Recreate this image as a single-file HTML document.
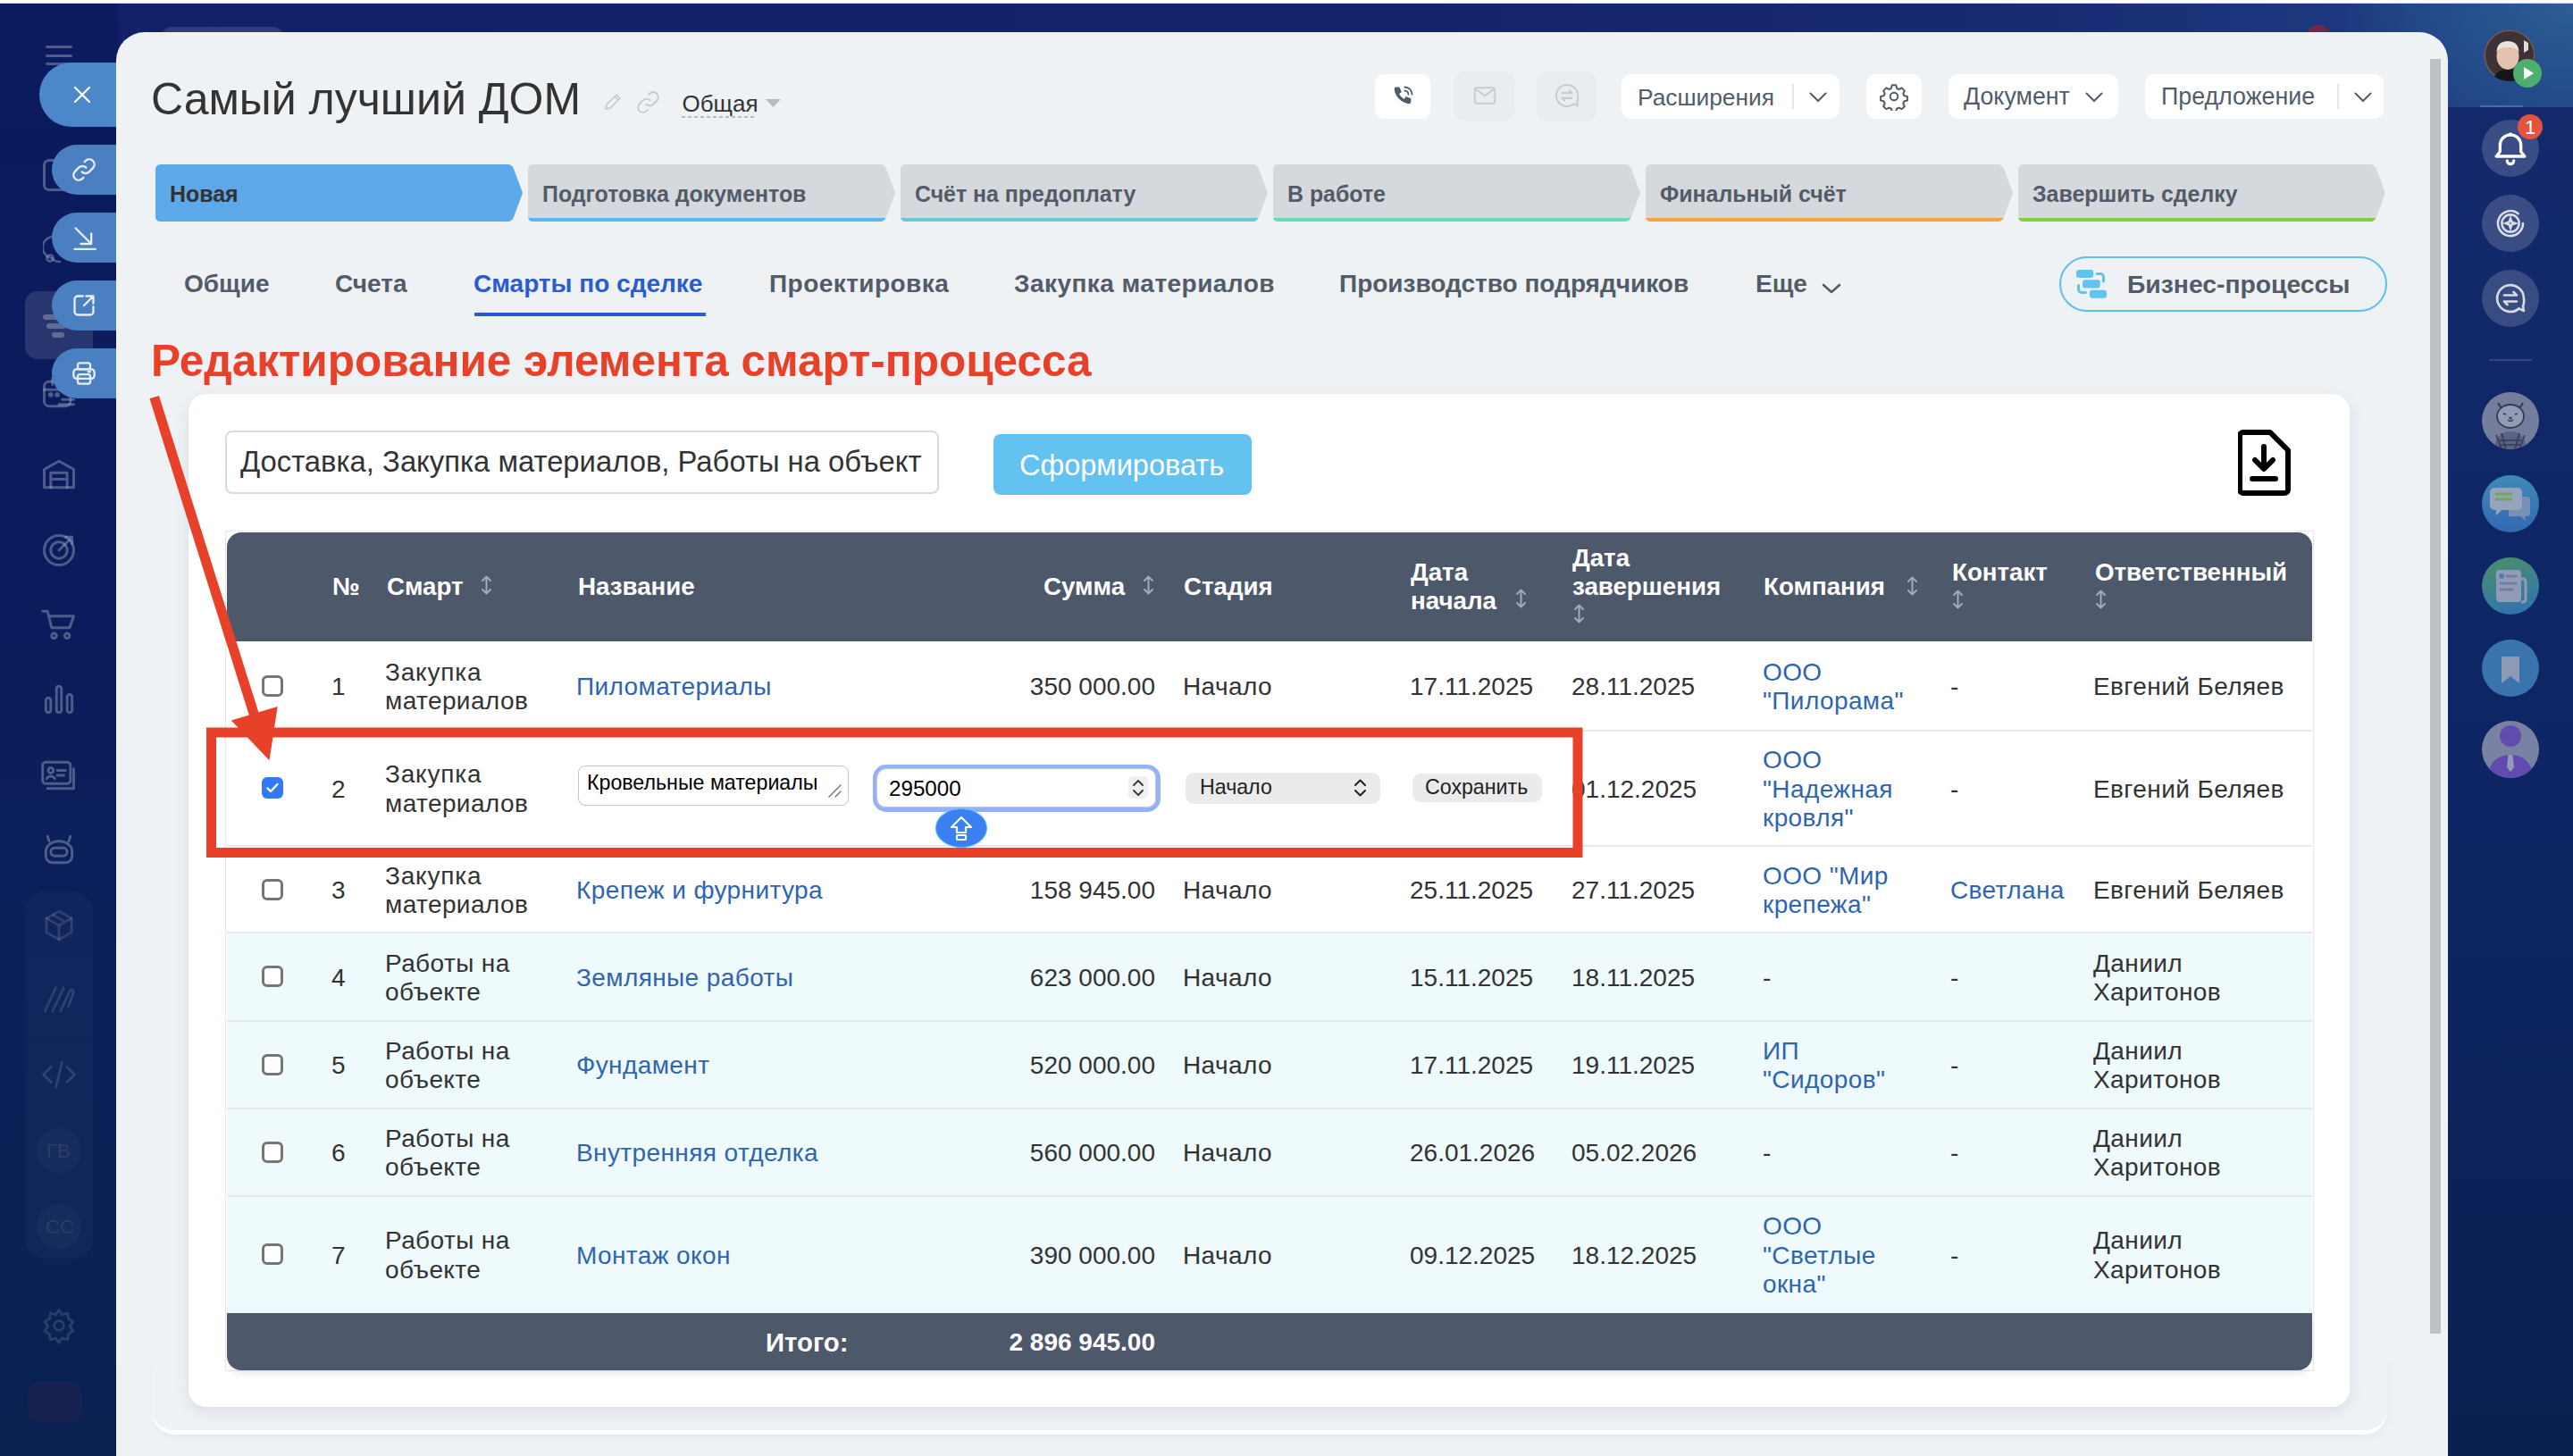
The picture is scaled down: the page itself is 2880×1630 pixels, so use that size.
<!DOCTYPE html><html><head><meta charset="utf-8"><style>
*{box-sizing:border-box}
html,body{margin:0;padding:0}
body{width:2880px;height:1630px;overflow:hidden;position:relative;background:#12206a;font-family:"Liberation Sans",sans-serif}
.t{position:absolute;white-space:nowrap;line-height:1}
</style></head><body><div style="position:absolute;left:0px;top:0px;width:2880px;height:1630px;background:#12206a"></div><div style="position:absolute;left:0px;top:0px;width:2880px;height:120px;background:radial-gradient(ellipse 260px 190px at 2880px 0px,#2d5f95 0%,#244c8b 55%,rgba(32,62,130,0) 100%),linear-gradient(90deg,#12206a 0%,#14226b 55%,#172a72 78%,#1e3a80 93%,#21428a 100%)"></div><div style="position:absolute;left:0px;top:0px;width:132px;height:1630px;background:linear-gradient(180deg,#0c1a5e 0%,#0b1c5c 40%,#0b2258 75%,#0a2152 100%)"></div><div style="position:absolute;left:2740px;top:120px;width:140px;height:1510px;background:linear-gradient(180deg,#13296c 0%,#0f2766 30%,#0c2460 60%,#0a2050 100%)"></div><div style="position:absolute;left:0px;top:0px;width:2880px;height:3px;background:#fcfcfc"></div><div style="position:absolute;left:0px;top:3px;width:2880px;height:1px;background:#d9d9d9"></div><div style="position:absolute;left:178px;top:30px;width:142px;height:20px;background:rgba(255,255,255,0.12);border-radius:16px 16px 0 0"></div><div style="position:absolute;left:2581px;top:28px;width:28px;height:28px;background:#6e2848;border-radius:50%"></div><div style="position:absolute;left:51px;top:50.5px;width:30px;height:3.0px;background:rgba(170,180,205,0.42);border-radius:2px"></div><div style="position:absolute;left:51px;top:60.5px;width:30px;height:3.0px;background:rgba(170,180,205,0.42);border-radius:2px"></div><div style="position:absolute;left:51px;top:70.0px;width:30px;height:3.0px;background:rgba(170,180,205,0.42);border-radius:2px"></div><div style="position:absolute;left:28px;top:326px;width:76px;height:76px;background:rgba(255,255,255,0.12);border-radius:14px"></div><svg style="position:absolute;left:44px;top:174px;fill:none;stroke:rgba(170,180,205,0.42);stroke-width:1.6;stroke-linecap:round;stroke-linejoin:round" width="44" height="44" viewBox="0 0 24 24"><rect x="3" y="3" width="15" height="18" rx="3"/></svg><svg style="position:absolute;left:48px;top:262px;fill:none;stroke:rgba(170,180,205,0.42);stroke-width:2.6;stroke-linecap:round" width="34" height="36" viewBox="0 0 34 36"><path d="M14 3a11 11 0 0 0-4 24M10 27a11 11 0 0 0 9 4"/><circle cx="8" cy="27" r="3.5"/></svg><svg style="position:absolute;left:48px;top:350px;fill:rgba(170,180,205,0.42);stroke:none" width="40" height="30" viewBox="0 0 40 30"><rect x="0" y="2" width="22" height="6" rx="3"/><rect x="4" y="12" width="22" height="6" rx="3"/><rect x="10" y="22" width="14" height="6" rx="3"/></svg><svg style="position:absolute;left:44px;top:418px;fill:none;stroke:rgba(170,180,205,0.42);stroke-width:1.6;stroke-linecap:round;stroke-linejoin:round" width="44" height="44" viewBox="0 0 24 24"><rect x="3" y="5" width="16" height="15" rx="3"/><path d="M8 3v4M3 10h16"/><circle cx="7" cy="13" r=".8"/><circle cx="11" cy="13" r=".8"/><path d="M12 19h9M14 16h7"/></svg><svg style="position:absolute;left:44px;top:509px;fill:none;stroke:rgba(170,180,205,0.42);stroke-width:1.6;stroke-linecap:round;stroke-linejoin:round" width="44" height="44" viewBox="0 0 24 24"><path d="M3 20V9l9-5 9 5v11z"/><path d="M7 20v-9h10v9M7 15h10"/></svg><svg style="position:absolute;left:44px;top:594px;fill:none;stroke:rgba(170,180,205,0.42);stroke-width:1.6;stroke-linecap:round;stroke-linejoin:round" width="44" height="44" viewBox="0 0 24 24"><circle cx="12" cy="12" r="9"/><circle cx="12" cy="12" r="5"/><path d="M12 12l7-7M16 4h4v4"/></svg><svg style="position:absolute;left:44px;top:677px;fill:none;stroke:rgba(170,180,205,0.42);stroke-width:1.6;stroke-linecap:round;stroke-linejoin:round" width="44" height="44" viewBox="0 0 24 24"><path d="M2 4h3l2.5 10h11L21 7H6"/><circle cx="9" cy="19" r="1.5"/><circle cx="17" cy="19" r="1.5"/></svg><svg style="position:absolute;left:44px;top:761px;fill:none;stroke:rgba(170,180,205,0.42);stroke-width:1.6;stroke-linecap:round;stroke-linejoin:round" width="44" height="44" viewBox="0 0 24 24"><rect x="4" y="11" width="3" height="9" rx="1.5"/><rect x="10.5" y="4" width="3" height="16" rx="1.5"/><rect x="17" y="9" width="3" height="11" rx="1.5"/></svg><svg style="position:absolute;left:44px;top:846px;fill:none;stroke:rgba(170,180,205,0.42);stroke-width:1.6;stroke-linecap:round;stroke-linejoin:round" width="44" height="44" viewBox="0 0 24 24"><rect x="2" y="4" width="17" height="13" rx="2"/><path d="M5 20h16V8"/><circle cx="7" cy="9" r="1.6"/><path d="M4.5 14c1-2 4-2 5 0M11 9h5M11 12h4"/></svg><svg style="position:absolute;left:44px;top:929px;fill:none;stroke:rgba(170,180,205,0.42);stroke-width:1.6;stroke-linecap:round;stroke-linejoin:round" width="44" height="44" viewBox="0 0 24 24"><path d="M4 13a8 6 0 0 1 16 0v3a4 4 0 0 1-4 4H8a4 4 0 0 1-4-4z"/><path d="M6 7L5 4M18 7l1-3"/><rect x="7" y="11" width="10" height="5" rx="2.5"/></svg><div style="position:absolute;left:28px;top:998px;width:76px;height:411px;background:rgba(255,255,255,0.025);border-radius:22px"></div><svg style="position:absolute;left:45px;top:1015px;fill:none;stroke:rgba(170,180,205,0.2);stroke-width:1.6;stroke-linecap:round;stroke-linejoin:round" width="42" height="42" viewBox="0 0 24 24"><path d="M12 3l8 4.5v9L12 21l-8-4.5v-9z"/><path d="M4 7.5l8 4.5 8-4.5M12 12v9M8 5.3l8 4.5"/></svg><svg style="position:absolute;left:45px;top:1097px;fill:none;stroke:rgba(170,180,205,0.2);stroke-width:1.6;stroke-linecap:round;stroke-linejoin:round" width="42" height="42" viewBox="0 0 24 24"><path d="M3 20L10 5M8 20l7-15M13 20l6-13c1-2 3 0 2 2l-3 8"/></svg><svg style="position:absolute;left:45px;top:1182px;fill:none;stroke:rgba(170,180,205,0.2);stroke-width:1.6;stroke-linecap:round;stroke-linejoin:round" width="42" height="42" viewBox="0 0 24 24"><path d="M7 7l-5 5 5 5M17 7l5 5-5 5M14 4l-4 16"/></svg><div style="position:absolute;left:41px;top:1263px;width:50px;height:50px;background:rgba(255,255,255,0.03);border-radius:50%"></div><div class="t" style="left:52.0px;top:1278.4px;font-size:22px;font-weight:400;color:rgba(170,180,205,0.14);">ГВ</div><div style="position:absolute;left:41px;top:1348px;width:50px;height:50px;background:rgba(255,255,255,0.03);border-radius:50%"></div><div class="t" style="left:51.0px;top:1363.4px;font-size:22px;font-weight:400;color:rgba(170,180,205,0.14);">СС</div><svg style="position:absolute;left:45px;top:1463px;fill:none;stroke:rgba(170,180,205,0.2);stroke-width:1.6;stroke-linecap:round;stroke-linejoin:round" width="42" height="42" viewBox="0 0 24 24"><circle cx="12" cy="12" r="3"/><path d="M12 2l2 3 3.5-1 .5 3.5 3 2-2 3 2 3-3 2-.5 3.5-3.5-1-2 3-2-3-3.5 1-.5-3.5-3-2 2-3-2-3 3-2 .5-3.5 3.5 1z"/></svg><div style="position:absolute;left:31px;top:1547px;width:61px;height:45px;background:rgba(150,40,60,0.10);border-radius:14px"></div><svg style="position:absolute;left:2780px;top:33px;" width="58" height="58" viewBox="0 0 58 58"><defs><clipPath id="av"><circle cx="29" cy="29" r="29"/></clipPath></defs><g clip-path="url(#av)"><rect width="58" height="58" fill="#3e3236"/><circle cx="29" cy="29" r="28" fill="none" stroke="#6a5a60" stroke-width="2"/><path d="M10 58c2-10 10-14 19-14s17 4 19 14z" fill="#15161c"/><ellipse cx="27" cy="30" rx="12.5" ry="15" fill="#e4c2ae"/><path d="M14.5 26c0-10 6-13 12.5-13s12.5 3 12.5 13c-2-5-6-6-12.5-6s-10.5 1-12.5 6z" fill="#e9e5da"/><path d="M45 12l5 3v8l-5 3z" fill="#ddd"/><circle cx="46" cy="44" r="2.5" fill="#e0a030"/></g></svg><div style="position:absolute;left:2813px;top:66px;width:32px;height:32px;background:#4caf6e;border-radius:50%"></div><svg style="position:absolute;left:2823px;top:73px;" width="14" height="18" viewBox="0 0 14 18"><path d="M2 2L13 9L2 16z" fill="#fff"/></svg><div style="position:absolute;left:2776px;top:118px;width:48px;height:2px;background:rgba(255,255,255,0.2)"></div><div style="position:absolute;left:2778px;top:134px;width:64px;height:64px;background:rgba(255,255,255,0.17);border-radius:50%"></div><div style="position:absolute;left:2778px;top:218px;width:64px;height:64px;background:rgba(255,255,255,0.17);border-radius:50%"></div><div style="position:absolute;left:2778px;top:302px;width:64px;height:64px;background:rgba(255,255,255,0.17);border-radius:50%"></div><svg style="position:absolute;left:2790px;top:144px;fill:none;stroke:#fff;stroke-width:2;stroke-linecap:round;stroke-linejoin:round" width="40" height="42" viewBox="0 0 24 24"><path d="M2.5 18h19l-2.5-3.2V10.5a7 7 0 0 0-14 0v4.3z"/><path d="M9.8 21a2.2 2.2 0 0 0 4.4 0M12 3v.6"/></svg><div style="position:absolute;left:2818px;top:128px;width:28px;height:28px;background:#e3533f;border-radius:50%"></div><div class="t" style="left:2826.0px;top:132.4px;font-size:22px;font-weight:400;color:#fff;">1</div><svg style="position:absolute;left:2789px;top:229px;fill:none;stroke:rgba(255,255,255,0.8);stroke-width:1.5;stroke-linecap:round" width="42" height="42" viewBox="0 0 24 24"><path d="M20 12a8 8 0 1 1-3-6.2"/><circle cx="12" cy="12" r="5.5"/><path d="M12 9l.8 2.2L15 12l-2.2.8L12 15l-.8-2.2L9 12l2.2-.8z"/></svg><svg style="position:absolute;left:2789px;top:313px;fill:none;stroke:rgba(255,255,255,0.8);stroke-width:1.5;stroke-linecap:round;stroke-linejoin:round" width="42" height="42" viewBox="0 0 24 24"><path d="M20.5 12a8.5 8.5 0 1 0-3 6.5l3 1.5-.5-3a8.5 8.5 0 0 0 .5-5z"/><path d="M8 10h8l-2-2M16 14H8l2 2"/></svg><div style="position:absolute;left:2786px;top:402px;width:48px;height:2px;background:rgba(255,255,255,0.15)"></div><svg style="position:absolute;left:2778px;top:439px;opacity:.82" width="64" height="64" viewBox="0 0 64 64"><defs><clipPath id="ac471"><circle cx="32" cy="32" r="32"/></clipPath></defs><g clip-path="url(#ac471)"><rect width="64" height="64" fill="#8c91a8"/><path d="M14 64c1-14 8-20 18-20s17 6 18 20z" fill="#6a6f86"/><path d="M16 48l6 16M22 46l5 18M42 46l-5 18M48 48l-6 16M20 54h24M20 59h24" stroke="#3c4058" stroke-width="1.6"/><path d="M18 12l5 8M46 12l-5 8" stroke="#3c4058" stroke-width="2"/><ellipse cx="32" cy="27" rx="15" ry="13" fill="#b2b6c6" stroke="#3c4058" stroke-width="1.8"/><path d="M27 25l-3-1M37 25l3-1M29 31q3 3 6 0" stroke="#3c4058" stroke-width="1.6" fill="none"/><circle cx="32" cy="29" r="1.6" fill="#3c4058"/></g></svg><svg style="position:absolute;left:2778px;top:532px;opacity:.82" width="64" height="64" viewBox="0 0 64 64"><defs><clipPath id="ac564"><circle cx="32" cy="32" r="32"/></clipPath></defs><g clip-path="url(#ac564)"><defs><linearGradient id="g1" x1="0" y1="0" x2="0" y2="1"><stop offset="0" stop-color="#4aa0c8"/><stop offset="1" stop-color="#3a78c4"/></linearGradient></defs><rect width="64" height="64" fill="url(#g1)"/><path d="M30 24h20a4 4 0 0 1 4 4v14a4 4 0 0 1-4 4h-2l1 5-6-5H30z" fill="#8fa8c8"/><path d="M14 14h26a5 5 0 0 1 5 5v15a5 5 0 0 1-5 5H22l-6 6v-6h-2a5 5 0 0 1-5-5V19a5 5 0 0 1 5-5z" fill="#b4bfd2"/><path d="M16 21h17M16 27h17" stroke="#8cc34a" stroke-width="3" stroke-linecap="round"/></g></svg><svg style="position:absolute;left:2778px;top:624px;opacity:.82" width="64" height="64" viewBox="0 0 64 64"><defs><clipPath id="ac656"><circle cx="32" cy="32" r="32"/></clipPath></defs><g clip-path="url(#ac656)"><defs><linearGradient id="g2" x1="0" y1="0" x2="0.3" y2="1"><stop offset="0" stop-color="#5aa868"/><stop offset="1" stop-color="#3a88b8"/></linearGradient></defs><rect width="64" height="64" fill="url(#g2)"/><rect x="16" y="14" width="28" height="36" rx="4" fill="#aeb5c8"/><path d="M44 24h2a3 3 0 0 1 3 3v20a3 3 0 0 1-3 3h-2" fill="none" stroke="#aeb5c8" stroke-width="3"/><circle cx="22" cy="21" r="3" fill="#4a98c8"/><path d="M28 21h10M21 29h17M21 36h13" stroke="#8a93ac" stroke-width="3" stroke-linecap="round"/></g></svg><svg style="position:absolute;left:2778px;top:716px;opacity:.82" width="64" height="64" viewBox="0 0 64 64"><defs><clipPath id="ac748"><circle cx="32" cy="32" r="32"/></clipPath></defs><g clip-path="url(#ac748)"><rect width="64" height="64" fill="#4486c0"/><path d="M22 19h20v30l-10-8-10 8z" fill="#aab4c8"/></g></svg><svg style="position:absolute;left:2778px;top:807px;opacity:.82" width="64" height="64" viewBox="0 0 64 64"><defs><clipPath id="ac839"><circle cx="32" cy="32" r="32"/></clipPath></defs><g clip-path="url(#ac839)"><rect width="64" height="64" fill="#9297b2"/><circle cx="32" cy="17" r="12" fill="#7454c0"/><path d="M6 64c2-18 12-26 26-26s24 8 26 26z" fill="#7454c0"/><path d="M29.5 38h5l1.5 14-4 5-4-5z" fill="#b0b4cc"/></g></svg><div style="position:absolute;left:44px;top:70px;width:96px;height:72px;background:#4a88c9;border-radius:36px 0 0 36px"></div><svg style="position:absolute;left:82px;top:96px;" width="20" height="20" viewBox="0 0 20 20"><path d="M2 2L18 18M18 2L2 18" stroke="#fff" stroke-width="2.2" stroke-linecap="round"/></svg><div style="position:absolute;left:58px;top:162px;width:82px;height:56px;background:#4a80c2;border-radius:28px 0 0 28px"></div><div style="position:absolute;left:58px;top:238px;width:82px;height:56px;background:#4a80c2;border-radius:28px 0 0 28px"></div><div style="position:absolute;left:58px;top:314px;width:82px;height:56px;background:#4a80c2;border-radius:28px 0 0 28px"></div><div style="position:absolute;left:58px;top:390px;width:82px;height:56px;background:#4a80c2;border-radius:28px 0 0 28px"></div><svg style="position:absolute;left:80px;top:176px;fill:none;stroke:#e8edf5;stroke-width:2;stroke-linecap:round;stroke-linejoin:round" width="28" height="28" viewBox="0 0 24 24"><path d="M10 14a5 5 0 0 0 7 0l4-4a5 5 0 0 0-7-7l-1.5 1.5"/><path d="M14 10a5 5 0 0 0-7 0l-4 4a5 5 0 0 0 7 7l1.5-1.5"/></svg><svg style="position:absolute;left:80px;top:252px;fill:none;stroke:#e8edf5;stroke-width:2;stroke-linecap:round;stroke-linejoin:round" width="28" height="28" viewBox="0 0 24 24"><path d="M4 3l15 15M19 8v10H9M3 23h20"/></svg><svg style="position:absolute;left:80px;top:328px;fill:none;stroke:#e8edf5;stroke-width:2;stroke-linecap:round;stroke-linejoin:round" width="28" height="28" viewBox="0 0 24 24"><path d="M11 3H6a3 3 0 0 0-3 3v12a3 3 0 0 0 3 3h12a3 3 0 0 0 3-3v-5M14 3h7v7M21 3l-9 9"/></svg><svg style="position:absolute;left:80px;top:404px;fill:none;stroke:#e8edf5;stroke-width:2;stroke-linecap:round;stroke-linejoin:round" width="28" height="28" viewBox="0 0 24 24"><rect x="6" y="2" width="12" height="6" rx="2"/><rect x="2" y="8" width="20" height="9" rx="3"/><rect x="6" y="13" width="12" height="9" rx="2"/><path d="M16 10.5h2"/></svg><div style="position:absolute;left:130px;top:36px;width:2610px;height:1644px;background:#eef2f5;border-radius:32px 32px 0 0"></div><div style="position:absolute;left:2720px;top:66px;width:12px;height:1427px;background:#bdc1c3"></div><div class="t" style="left:169.0px;top:86.1px;font-size:50px;font-weight:400;color:#333;">Самый лучший ДОМ</div><svg style="position:absolute;left:674px;top:102px;fill:none;stroke:#c5c9ce;stroke-width:1.6;stroke-linecap:round;stroke-linejoin:round" width="24" height="24" viewBox="0 0 24 24"><path d="M4 20l1-5L16 4l4 4L9 19z M14 6l4 4"/></svg><svg style="position:absolute;left:712px;top:101px;fill:none;stroke:#c5c9ce;stroke-width:1.6;stroke-linecap:round;stroke-linejoin:round" width="27" height="27" viewBox="0 0 24 24"><path d="M10 14a5 5 0 0 0 7 0l4-4a5 5 0 0 0-7-7l-1.5 1.5"/><path d="M14 10a5 5 0 0 0-7 0l-4 4a5 5 0 0 0 7 7l1.5-1.5"/></svg><div class="t" style="left:763.5px;top:102.6px;font-size:26px;font-weight:400;color:#333;">Общая</div><div style="position:absolute;left:763px;top:130px;width:84px;height:2px;background:repeating-linear-gradient(90deg,#b9bdc3 0 4px,transparent 4px 7px)"></div><svg style="position:absolute;left:857px;top:111px;" width="17" height="9" viewBox="0 0 17 9"><path d="M0 0h17L8.5 9z" fill="#b5bac1"/></svg><div style="position:absolute;left:1539px;top:83px;width:62px;height:50px;background:#fff;border-radius:11px"></div><svg style="position:absolute;left:1556px;top:94px;" width="28" height="28" viewBox="0 0 24 24"><path d="M6 3h3l2 5-2.5 1.5a11 11 0 0 0 5 5L15 12l5 2v3a2 2 0 0 1-2 2A16 16 0 0 1 4 5a2 2 0 0 1 2-2z" fill="#525c69"/><path d="M14 3a7 7 0 0 1 7 7M14 6.5a3.5 3.5 0 0 1 3.5 3.5" stroke="#525c69" stroke-width="1.6" fill="none" stroke-linecap="round"/></svg><div style="position:absolute;left:1628px;top:81px;width:67px;height:54px;background:rgba(0,0,0,0.018);box-shadow:inset 0 0 0 1px rgba(0,0,0,0.02);border-radius:11px"></div><svg style="position:absolute;left:1645px;top:92px;fill:none;stroke:#c8ccd1;stroke-width:1.5" width="34" height="30" viewBox="0 0 24 24"><rect x="3" y="5" width="18" height="14" rx="2"/><path d="M3.5 6l8.5 6 8.5-6"/></svg><div style="position:absolute;left:1720px;top:81px;width:67px;height:54px;background:rgba(0,0,0,0.018);box-shadow:inset 0 0 0 1px rgba(0,0,0,0.02);border-radius:11px"></div><svg style="position:absolute;left:1737px;top:90px;fill:none;stroke:#c8ccd1;stroke-width:1.5;stroke-linecap:round;stroke-linejoin:round" width="34" height="34" viewBox="0 0 24 24"><path d="M20.5 12a8.5 8.5 0 1 0-3 6.5l3 1.5-.5-3a8.5 8.5 0 0 0 .5-5z"/><path d="M8 10h8l-2-2M16 14H8l2 2"/></svg><div style="position:absolute;left:1815px;top:83px;width:244px;height:50px;background:#fff;border-radius:11px"></div><div class="t" style="left:1833.0px;top:95.7px;font-size:26.3px;font-weight:400;color:#525c69;">Расширения</div><div style="position:absolute;left:2006px;top:94px;width:2px;height:28px;background:#e3e5e8"></div><svg style="position:absolute;left:2025px;top:103px;" width="20" height="12" viewBox="0 0 20 12"><path d="M1.5 1.5L10 10l8.5-8.5" fill="none" stroke="#525c69" stroke-width="2" stroke-linecap="round"/></svg><div style="position:absolute;left:2089px;top:83px;width:62px;height:50px;background:#fff;border-radius:11px"></div><svg style="position:absolute;left:2104px;top:92px;fill:none;stroke:#525c69;stroke-width:1.5;stroke-linejoin:round" width="32" height="32" viewBox="0 0 24 24"><circle cx="12" cy="12" r="3.2"/><path d="M10.3 2.5h3.4l.6 2.6 1.8.9 2.4-1.2 2.4 2.4-1.2 2.4.9 1.8 2.6.6v3.4l-2.6.6-.9 1.8 1.2 2.4-2.4 2.4-2.4-1.2-1.8.9-.6 2.6h-3.4l-.6-2.6-1.8-.9-2.4 1.2-2.4-2.4 1.2-2.4-.9-1.8-2.6-.6v-3.4l2.6-.6.9-1.8-1.2-2.4 2.4-2.4 2.4 1.2 1.8-.9z"/></svg><div style="position:absolute;left:2181px;top:83px;width:190px;height:50px;background:#fff;border-radius:11px"></div><div class="t" style="left:2198.0px;top:95.3px;font-size:26.8px;font-weight:400;color:#525c69;">Документ</div><svg style="position:absolute;left:2334px;top:103px;" width="20" height="12" viewBox="0 0 20 12"><path d="M1.5 1.5L10 10l8.5-8.5" fill="none" stroke="#525c69" stroke-width="2" stroke-linecap="round"/></svg><div style="position:absolute;left:2401px;top:83px;width:267px;height:50px;background:#fff;border-radius:11px"></div><div class="t" style="left:2419.0px;top:95.3px;font-size:26.8px;font-weight:400;color:#525c69;">Предложение</div><div style="position:absolute;left:2616px;top:94px;width:2px;height:28px;background:#e3e5e8"></div><svg style="position:absolute;left:2635px;top:103px;" width="20" height="12" viewBox="0 0 20 12"><path d="M1.5 1.5L10 10l8.5-8.5" fill="none" stroke="#525c69" stroke-width="2" stroke-linecap="round"/></svg><svg style="position:absolute;left:174px;top:184px;" width="411" height="64" viewBox="0 0 411 64"><path d="M6 0 H394 Q399 0 401 5 L411 32 L401 59 Q399 64 394 64 H6 Q0 64 0 58 V6 Q0 0 6 0 Z" fill="#5ca8e8"/></svg><div class="t" style="left:190.0px;top:205.4px;font-size:24.9px;font-weight:700;color:#333;">Новая</div><svg style="position:absolute;left:591px;top:184px;" width="411" height="64" viewBox="0 0 411 64"><defs><clipPath id="c1"><path d="M6 0 H394 Q399 0 401 5 L411 32 L401 59 Q399 64 394 64 H6 Q0 64 0 58 V6 Q0 0 6 0 Z"/></clipPath></defs><g clip-path="url(#c1)"><rect width="411" height="64" fill="#d5d8dd"/><rect y="60" width="411" height="4" fill="#5bb8ec"/></g></svg><div class="t" style="left:607.0px;top:205.4px;font-size:24.9px;font-weight:700;color:#525c69;">Подготовка документов</div><svg style="position:absolute;left:1008px;top:184px;" width="411" height="64" viewBox="0 0 411 64"><defs><clipPath id="c2"><path d="M6 0 H394 Q399 0 401 5 L411 32 L401 59 Q399 64 394 64 H6 Q0 64 0 58 V6 Q0 0 6 0 Z"/></clipPath></defs><g clip-path="url(#c2)"><rect width="411" height="64" fill="#d5d8dd"/><rect y="60" width="411" height="4" fill="#6fc6d6"/></g></svg><div class="t" style="left:1024.0px;top:205.4px;font-size:24.9px;font-weight:700;color:#525c69;">Счёт на предоплату</div><svg style="position:absolute;left:1425px;top:184px;" width="411" height="64" viewBox="0 0 411 64"><defs><clipPath id="c3"><path d="M6 0 H394 Q399 0 401 5 L411 32 L401 59 Q399 64 394 64 H6 Q0 64 0 58 V6 Q0 0 6 0 Z"/></clipPath></defs><g clip-path="url(#c3)"><rect width="411" height="64" fill="#d5d8dd"/><rect y="60" width="411" height="4" fill="#6cdbb6"/></g></svg><div class="t" style="left:1441.0px;top:205.4px;font-size:24.9px;font-weight:700;color:#525c69;">В работе</div><svg style="position:absolute;left:1842px;top:184px;" width="411" height="64" viewBox="0 0 411 64"><defs><clipPath id="c4"><path d="M6 0 H394 Q399 0 401 5 L411 32 L401 59 Q399 64 394 64 H6 Q0 64 0 58 V6 Q0 0 6 0 Z"/></clipPath></defs><g clip-path="url(#c4)"><rect width="411" height="64" fill="#d5d8dd"/><rect y="60" width="411" height="4" fill="#f5a53f"/></g></svg><div class="t" style="left:1858.0px;top:205.4px;font-size:24.9px;font-weight:700;color:#525c69;">Финальный счёт</div><svg style="position:absolute;left:2259px;top:184px;" width="411" height="64" viewBox="0 0 411 64"><defs><clipPath id="c5"><path d="M6 0 H394 Q399 0 401 5 L411 32 L401 59 Q399 64 394 64 H6 Q0 64 0 58 V6 Q0 0 6 0 Z"/></clipPath></defs><g clip-path="url(#c5)"><rect width="411" height="64" fill="#d5d8dd"/><rect y="60" width="411" height="4" fill="#7fd03c"/></g></svg><div class="t" style="left:2275.0px;top:205.4px;font-size:24.9px;font-weight:700;color:#525c69;">Завершить сделку</div><div class="t" style="left:206.0px;top:304.3px;font-size:28px;font-weight:700;color:#525c69;">Общие</div><div class="t" style="left:375.0px;top:304.3px;font-size:28px;font-weight:700;color:#525c69;">Счета</div><div class="t" style="left:530.0px;top:304.3px;font-size:28px;font-weight:700;color:#2a5bd0;">Смарты по сделке</div><div class="t" style="left:861.0px;top:304.3px;font-size:28px;font-weight:700;color:#525c69;letter-spacing:0.45px">Проектировка</div><div class="t" style="left:1135.0px;top:304.3px;font-size:28px;font-weight:700;color:#525c69;letter-spacing:0.45px">Закупка материалов</div><div class="t" style="left:1499.0px;top:304.3px;font-size:28px;font-weight:700;color:#525c69;">Производство подрядчиков</div><div class="t" style="left:1965.0px;top:304.3px;font-size:28px;font-weight:700;color:#525c69;">Еще</div><div style="position:absolute;left:531px;top:350px;width:259px;height:4px;background:#2a5bd0;border-radius:1px"></div><svg style="position:absolute;left:2038px;top:316px;" width="24" height="14" viewBox="0 0 24 14"><path d="M3 3l9 8 9-8" fill="none" stroke="#525c69" stroke-width="2.6" stroke-linecap="round" stroke-linejoin="round"/></svg><div style="position:absolute;left:2305px;top:287px;width:367px;height:62px;border:2px solid #5ec0ee;border-radius:31px"></div><svg style="position:absolute;left:2320px;top:298px;" width="42" height="40" viewBox="0 0 42 40"><rect x="4" y="4" width="19.2" height="9" rx="3" fill="#62c2f0"/><rect x="11" y="15.2" width="19.8" height="9.4" rx="3" fill="#62c2f0"/><rect x="19" y="26.8" width="19" height="9" rx="3" fill="#62c2f0"/><path d="M27 8.5H31a3.5 3.5 0 0 1 3.5 3.5V17M6.5 21.5V26a3.5 3.5 0 0 0 3.5 3.5H14.5" fill="none" stroke="#62c2f0" stroke-width="3" stroke-linecap="round"/></svg><div class="t" style="left:2381.0px;top:304.0px;font-size:28.3px;font-weight:700;color:#525c69;">Бизнес-процессы</div><div class="t" style="left:169.0px;top:379.1px;font-size:49.5px;font-weight:700;color:#e8412a;">Редактирование элемента смарт-процесса</div><div style="position:absolute;left:170px;top:1520px;width:2502px;height:86px;border-bottom:5px solid #fff;border-radius:0 0 26px 26px;box-shadow:2px 5px 10px -2px rgba(40,50,70,0.05)"></div><div style="position:absolute;left:211px;top:441px;width:2419px;height:1134px;background:#fff;border-radius:20px;box-shadow:0 5px 16px rgba(50,60,80,0.10)"></div><div style="position:absolute;left:252px;top:482px;width:799px;height:71px;border:2px solid #d8dadd;border-radius:8px;background:#fff"></div><div class="t" style="left:269.0px;top:500.7px;font-size:32.8px;font-weight:400;color:#333;">Доставка, Закупка материалов, Работы на объект</div><div style="position:absolute;left:1112px;top:486px;width:289px;height:68px;background:#63c2f0;border-radius:8px"></div><div class="t" style="left:1141.0px;top:505.1px;font-size:32.5px;font-weight:400;color:#fff;">Сформировать</div><svg style="position:absolute;left:2505px;top:480px;" width="62" height="76" viewBox="0 0 62 76"><path d="M6 4h30l20 20v44a4 4 0 0 1-4 4H6a4 4 0 0 1-4-4V8a4 4 0 0 1 4-4z" fill="none" stroke="#000" stroke-width="6" stroke-linejoin="round"/><path d="M29 20v24M19 35l10 10 10-10" fill="none" stroke="#000" stroke-width="6" stroke-linecap="round" stroke-linejoin="round"/><path d="M16 56h26" stroke="#000" stroke-width="6" stroke-linecap="round"/></svg><div style="position:absolute;left:252px;top:594px;width:2338px;height:941px;border:1px solid #e4e6ea"></div><div style="position:absolute;left:254px;top:596px;width:2334px;height:122px;background:#4e586b;border-radius:16px 16px 0 0"></div><div style="position:absolute;left:254px;top:718px;width:2334px;height:99.5px;background:#fff"></div><div style="position:absolute;left:254px;top:817.5px;width:2334px;height:129.5px;background:#fff"></div><div style="position:absolute;left:254px;top:816.5px;width:2334px;height:2.0px;background:#e6e8eb"></div><div style="position:absolute;left:254px;top:947px;width:2334px;height:97px;background:#fff"></div><div style="position:absolute;left:254px;top:946px;width:2334px;height:2px;background:#e6e8eb"></div><div style="position:absolute;left:254px;top:1044px;width:2334px;height:98.59999999999991px;background:#eefafc"></div><div style="position:absolute;left:254px;top:1043px;width:2334px;height:2px;background:#e6e8eb"></div><div style="position:absolute;left:254px;top:1142.6px;width:2334px;height:98.0px;background:#eefafc"></div><div style="position:absolute;left:254px;top:1141.6px;width:2334px;height:2.0px;background:#e6e8eb"></div><div style="position:absolute;left:254px;top:1240.6px;width:2334px;height:97.90000000000009px;background:#eefafc"></div><div style="position:absolute;left:254px;top:1239.6px;width:2334px;height:2.0px;background:#e6e8eb"></div><div style="position:absolute;left:254px;top:1338.5px;width:2334px;height:131.5px;background:#eefafc"></div><div style="position:absolute;left:254px;top:1337.5px;width:2334px;height:2.0px;background:#e6e8eb"></div><div style="position:absolute;left:254px;top:1470px;width:2334px;height:64px;background:#4e586b;border-radius:0 0 16px 16px;box-shadow:0 7px 9px -4px rgba(30,40,60,0.12)"></div><div class="t" style="left:372.0px;top:643.1px;font-size:27.7px;font-weight:700;color:#fff;">№</div><div class="t" style="left:433.0px;top:643.1px;font-size:27.7px;font-weight:700;color:#fff;">Смарт</div><svg style="position:absolute;left:538px;top:644px;" width="13" height="22" viewBox="0 0 13 22"><path d="M6.5 2v18M2 6l4.5-4.5L11 6M2 16l4.5 4.5L11 16" fill="none" stroke="#a3aab5" stroke-width="2" stroke-linecap="round" stroke-linejoin="round"/></svg><div class="t" style="left:647.0px;top:643.1px;font-size:27.7px;font-weight:700;color:#fff;">Название</div><div class="t" style="left:1168.0px;top:643.1px;font-size:27.7px;font-weight:700;color:#fff;">Сумма</div><svg style="position:absolute;left:1279px;top:644px;" width="13" height="22" viewBox="0 0 13 22"><path d="M6.5 2v18M2 6l4.5-4.5L11 6M2 16l4.5 4.5L11 16" fill="none" stroke="#a3aab5" stroke-width="2" stroke-linecap="round" stroke-linejoin="round"/></svg><div class="t" style="left:1325.0px;top:643.1px;font-size:27.7px;font-weight:700;color:#fff;">Стадия</div><div class="t" style="left:1579.0px;top:627.1px;font-size:27.7px;font-weight:700;color:#fff;">Дата</div><div class="t" style="left:1579.0px;top:659.1px;font-size:27.7px;font-weight:700;color:#fff;">начала</div><svg style="position:absolute;left:1696px;top:659px;" width="13" height="22" viewBox="0 0 13 22"><path d="M6.5 2v18M2 6l4.5-4.5L11 6M2 16l4.5 4.5L11 16" fill="none" stroke="#a3aab5" stroke-width="2" stroke-linecap="round" stroke-linejoin="round"/></svg><div class="t" style="left:1760.0px;top:611.1px;font-size:27.7px;font-weight:700;color:#fff;">Дата</div><div class="t" style="left:1760.0px;top:643.1px;font-size:27.7px;font-weight:700;color:#fff;">завершения</div><svg style="position:absolute;left:1761px;top:676px;" width="13" height="22" viewBox="0 0 13 22"><path d="M6.5 2v18M2 6l4.5-4.5L11 6M2 16l4.5 4.5L11 16" fill="none" stroke="#a3aab5" stroke-width="2" stroke-linecap="round" stroke-linejoin="round"/></svg><div class="t" style="left:1974.0px;top:643.1px;font-size:27.7px;font-weight:700;color:#fff;">Компания</div><svg style="position:absolute;left:2134px;top:645px;" width="13" height="22" viewBox="0 0 13 22"><path d="M6.5 2v18M2 6l4.5-4.5L11 6M2 16l4.5 4.5L11 16" fill="none" stroke="#a3aab5" stroke-width="2" stroke-linecap="round" stroke-linejoin="round"/></svg><div class="t" style="left:2185.0px;top:627.1px;font-size:27.7px;font-weight:700;color:#fff;">Контакт</div><svg style="position:absolute;left:2185px;top:660px;" width="13" height="22" viewBox="0 0 13 22"><path d="M6.5 2v18M2 6l4.5-4.5L11 6M2 16l4.5 4.5L11 16" fill="none" stroke="#a3aab5" stroke-width="2" stroke-linecap="round" stroke-linejoin="round"/></svg><div class="t" style="left:2345.0px;top:627.1px;font-size:27.7px;font-weight:700;color:#fff;">Ответственный</div><svg style="position:absolute;left:2345px;top:660px;" width="13" height="22" viewBox="0 0 13 22"><path d="M6.5 2v18M2 6l4.5-4.5L11 6M2 16l4.5 4.5L11 16" fill="none" stroke="#a3aab5" stroke-width="2" stroke-linecap="round" stroke-linejoin="round"/></svg><div style="position:absolute;left:293px;top:755.75px;width:24px;height:24.0px;border:3px solid #767676;border-radius:6px;background:#fff"></div><div class="t" style="left:371.0px;top:755.2px;font-size:28px;font-weight:400;color:#333;">1</div><div class="t" style="left:431.0px;top:738.9px;font-size:28px;font-weight:400;color:#333;letter-spacing:0.8px">Закупка</div><div class="t" style="left:431.0px;top:771.4px;font-size:28px;font-weight:400;color:#333;letter-spacing:0.4px">материалов</div><div class="t" style="left:645.0px;top:755.2px;font-size:28px;font-weight:400;color:#2f64b1;letter-spacing:0.4px">Пиломатериалы</div><div class="t" style="right:1587.0px;top:755.2px;font-size:28px;font-weight:400;color:#333;">350 000.00</div><div class="t" style="left:1324.0px;top:755.2px;font-size:28px;font-weight:400;color:#333;letter-spacing:0.4px">Начало</div><div class="t" style="left:1578.0px;top:755.2px;font-size:28px;font-weight:400;color:#333;">17.11.2025</div><div class="t" style="left:1759.0px;top:755.2px;font-size:28px;font-weight:400;color:#333;">28.11.2025</div><div class="t" style="left:1973.0px;top:738.9px;font-size:28px;font-weight:400;color:#2f64b1;letter-spacing:0.4px">ООО</div><div class="t" style="left:1973.0px;top:771.4px;font-size:28px;font-weight:400;color:#2f64b1;letter-spacing:0.4px">"Пилорама"</div><div class="t" style="left:2183.0px;top:755.2px;font-size:28px;font-weight:400;color:#333;">-</div><div class="t" style="left:2343.0px;top:755.2px;font-size:28px;font-weight:400;color:#333;letter-spacing:0.4px">Евгений Беляев</div><div style="position:absolute;left:293px;top:870.25px;width:24px;height:24.0px;background:#3478f6;border-radius:6px"></div><svg style="position:absolute;left:296px;top:873.25px;" width="18" height="18" viewBox="0 0 18 18"><path d="M3.5 9.5l3.5 3.5 7.5-8" fill="none" stroke="#fff" stroke-width="2.4" stroke-linecap="round" stroke-linejoin="round"/></svg><div class="t" style="left:371.0px;top:869.7px;font-size:28px;font-weight:400;color:#333;">2</div><div class="t" style="left:431.0px;top:853.4px;font-size:28px;font-weight:400;color:#333;letter-spacing:0.8px">Закупка</div><div class="t" style="left:431.0px;top:885.9px;font-size:28px;font-weight:400;color:#333;letter-spacing:0.4px">материалов</div><div class="t" style="left:1759.0px;top:869.7px;font-size:28px;font-weight:400;color:#333;">01.12.2025</div><div class="t" style="left:1973.0px;top:837.2px;font-size:28px;font-weight:400;color:#2f64b1;letter-spacing:0.4px">ООО</div><div class="t" style="left:1973.0px;top:869.7px;font-size:28px;font-weight:400;color:#2f64b1;letter-spacing:0.4px">"Надежная</div><div class="t" style="left:1973.0px;top:902.2px;font-size:28px;font-weight:400;color:#2f64b1;letter-spacing:0.4px">кровля"</div><div class="t" style="left:2183.0px;top:869.7px;font-size:28px;font-weight:400;color:#333;">-</div><div class="t" style="left:2343.0px;top:869.7px;font-size:28px;font-weight:400;color:#333;letter-spacing:0.4px">Евгений Беляев</div><div style="position:absolute;left:293px;top:983.5px;width:24px;height:24.0px;border:3px solid #767676;border-radius:6px;background:#fff"></div><div class="t" style="left:371.0px;top:982.9px;font-size:28px;font-weight:400;color:#333;">3</div><div class="t" style="left:431.0px;top:966.7px;font-size:28px;font-weight:400;color:#333;letter-spacing:0.8px">Закупка</div><div class="t" style="left:431.0px;top:999.2px;font-size:28px;font-weight:400;color:#333;letter-spacing:0.4px">материалов</div><div class="t" style="left:645.0px;top:982.9px;font-size:28px;font-weight:400;color:#2f64b1;letter-spacing:0.4px">Крепеж и фурнитура</div><div class="t" style="right:1587.0px;top:982.9px;font-size:28px;font-weight:400;color:#333;">158 945.00</div><div class="t" style="left:1324.0px;top:982.9px;font-size:28px;font-weight:400;color:#333;letter-spacing:0.4px">Начало</div><div class="t" style="left:1578.0px;top:982.9px;font-size:28px;font-weight:400;color:#333;">25.11.2025</div><div class="t" style="left:1759.0px;top:982.9px;font-size:28px;font-weight:400;color:#333;">27.11.2025</div><div class="t" style="left:1973.0px;top:966.7px;font-size:28px;font-weight:400;color:#2f64b1;letter-spacing:0.4px">ООО "Мир</div><div class="t" style="left:1973.0px;top:999.2px;font-size:28px;font-weight:400;color:#2f64b1;letter-spacing:0.4px">крепежа"</div><div class="t" style="left:2183.0px;top:982.9px;font-size:28px;font-weight:400;color:#2f64b1;letter-spacing:0.4px">Светлана</div><div class="t" style="left:2343.0px;top:982.9px;font-size:28px;font-weight:400;color:#333;letter-spacing:0.4px">Евгений Беляев</div><div style="position:absolute;left:293px;top:1081.3px;width:24px;height:24.0px;border:3px solid #767676;border-radius:6px;background:#fff"></div><div class="t" style="left:371.0px;top:1080.7px;font-size:28px;font-weight:400;color:#333;">4</div><div class="t" style="left:431.0px;top:1064.5px;font-size:28px;font-weight:400;color:#333;letter-spacing:0.4px">Работы на</div><div class="t" style="left:431.0px;top:1097.0px;font-size:28px;font-weight:400;color:#333;letter-spacing:0.4px">объекте</div><div class="t" style="left:645.0px;top:1080.7px;font-size:28px;font-weight:400;color:#2f64b1;letter-spacing:0.4px">Земляные работы</div><div class="t" style="right:1587.0px;top:1080.7px;font-size:28px;font-weight:400;color:#333;">623 000.00</div><div class="t" style="left:1324.0px;top:1080.7px;font-size:28px;font-weight:400;color:#333;letter-spacing:0.4px">Начало</div><div class="t" style="left:1578.0px;top:1080.7px;font-size:28px;font-weight:400;color:#333;">15.11.2025</div><div class="t" style="left:1759.0px;top:1080.7px;font-size:28px;font-weight:400;color:#333;">18.11.2025</div><div class="t" style="left:1973.0px;top:1080.7px;font-size:28px;font-weight:400;color:#333;">-</div><div class="t" style="left:2183.0px;top:1080.7px;font-size:28px;font-weight:400;color:#333;">-</div><div class="t" style="left:2343.0px;top:1064.5px;font-size:28px;font-weight:400;color:#333;letter-spacing:0.4px">Даниил</div><div class="t" style="left:2343.0px;top:1097.0px;font-size:28px;font-weight:400;color:#333;letter-spacing:0.4px">Харитонов</div><div style="position:absolute;left:293px;top:1179.6px;width:24px;height:24.0px;border:3px solid #767676;border-radius:6px;background:#fff"></div><div class="t" style="left:371.0px;top:1179.0px;font-size:28px;font-weight:400;color:#333;">5</div><div class="t" style="left:431.0px;top:1162.8px;font-size:28px;font-weight:400;color:#333;letter-spacing:0.4px">Работы на</div><div class="t" style="left:431.0px;top:1195.3px;font-size:28px;font-weight:400;color:#333;letter-spacing:0.4px">объекте</div><div class="t" style="left:645.0px;top:1179.0px;font-size:28px;font-weight:400;color:#2f64b1;letter-spacing:0.4px">Фундамент</div><div class="t" style="right:1587.0px;top:1179.0px;font-size:28px;font-weight:400;color:#333;">520 000.00</div><div class="t" style="left:1324.0px;top:1179.0px;font-size:28px;font-weight:400;color:#333;letter-spacing:0.4px">Начало</div><div class="t" style="left:1578.0px;top:1179.0px;font-size:28px;font-weight:400;color:#333;">17.11.2025</div><div class="t" style="left:1759.0px;top:1179.0px;font-size:28px;font-weight:400;color:#333;">19.11.2025</div><div class="t" style="left:1973.0px;top:1162.8px;font-size:28px;font-weight:400;color:#2f64b1;letter-spacing:0.4px">ИП</div><div class="t" style="left:1973.0px;top:1195.3px;font-size:28px;font-weight:400;color:#2f64b1;letter-spacing:0.4px">"Сидоров"</div><div class="t" style="left:2183.0px;top:1179.0px;font-size:28px;font-weight:400;color:#333;">-</div><div class="t" style="left:2343.0px;top:1162.8px;font-size:28px;font-weight:400;color:#333;letter-spacing:0.4px">Даниил</div><div class="t" style="left:2343.0px;top:1195.3px;font-size:28px;font-weight:400;color:#333;letter-spacing:0.4px">Харитонов</div><div style="position:absolute;left:293px;top:1277.55px;width:24px;height:24.0px;border:3px solid #767676;border-radius:6px;background:#fff"></div><div class="t" style="left:371.0px;top:1277.0px;font-size:28px;font-weight:400;color:#333;">6</div><div class="t" style="left:431.0px;top:1260.7px;font-size:28px;font-weight:400;color:#333;letter-spacing:0.4px">Работы на</div><div class="t" style="left:431.0px;top:1293.2px;font-size:28px;font-weight:400;color:#333;letter-spacing:0.4px">объекте</div><div class="t" style="left:645.0px;top:1277.0px;font-size:28px;font-weight:400;color:#2f64b1;letter-spacing:0.4px">Внутренняя отделка</div><div class="t" style="right:1587.0px;top:1277.0px;font-size:28px;font-weight:400;color:#333;">560 000.00</div><div class="t" style="left:1324.0px;top:1277.0px;font-size:28px;font-weight:400;color:#333;letter-spacing:0.4px">Начало</div><div class="t" style="left:1578.0px;top:1277.0px;font-size:28px;font-weight:400;color:#333;">26.01.2026</div><div class="t" style="left:1759.0px;top:1277.0px;font-size:28px;font-weight:400;color:#333;">05.02.2026</div><div class="t" style="left:1973.0px;top:1277.0px;font-size:28px;font-weight:400;color:#333;">-</div><div class="t" style="left:2183.0px;top:1277.0px;font-size:28px;font-weight:400;color:#333;">-</div><div class="t" style="left:2343.0px;top:1260.7px;font-size:28px;font-weight:400;color:#333;letter-spacing:0.4px">Даниил</div><div class="t" style="left:2343.0px;top:1293.2px;font-size:28px;font-weight:400;color:#333;letter-spacing:0.4px">Харитонов</div><div style="position:absolute;left:293px;top:1392.25px;width:24px;height:24.0px;border:3px solid #767676;border-radius:6px;background:#fff"></div><div class="t" style="left:371.0px;top:1391.7px;font-size:28px;font-weight:400;color:#333;">7</div><div class="t" style="left:431.0px;top:1375.4px;font-size:28px;font-weight:400;color:#333;letter-spacing:0.4px">Работы на</div><div class="t" style="left:431.0px;top:1407.9px;font-size:28px;font-weight:400;color:#333;letter-spacing:0.4px">объекте</div><div class="t" style="left:645.0px;top:1391.7px;font-size:28px;font-weight:400;color:#2f64b1;letter-spacing:0.4px">Монтаж окон</div><div class="t" style="right:1587.0px;top:1391.7px;font-size:28px;font-weight:400;color:#333;">390 000.00</div><div class="t" style="left:1324.0px;top:1391.7px;font-size:28px;font-weight:400;color:#333;letter-spacing:0.4px">Начало</div><div class="t" style="left:1578.0px;top:1391.7px;font-size:28px;font-weight:400;color:#333;">09.12.2025</div><div class="t" style="left:1759.0px;top:1391.7px;font-size:28px;font-weight:400;color:#333;">18.12.2025</div><div class="t" style="left:1973.0px;top:1359.2px;font-size:28px;font-weight:400;color:#2f64b1;letter-spacing:0.4px">ООО</div><div class="t" style="left:1973.0px;top:1391.7px;font-size:28px;font-weight:400;color:#2f64b1;letter-spacing:0.4px">"Светлые</div><div class="t" style="left:1973.0px;top:1424.2px;font-size:28px;font-weight:400;color:#2f64b1;letter-spacing:0.4px">окна"</div><div class="t" style="left:2183.0px;top:1391.7px;font-size:28px;font-weight:400;color:#333;">-</div><div class="t" style="left:2343.0px;top:1375.4px;font-size:28px;font-weight:400;color:#333;letter-spacing:0.4px">Даниил</div><div class="t" style="left:2343.0px;top:1407.9px;font-size:28px;font-weight:400;color:#333;letter-spacing:0.4px">Харитонов</div><div class="t" style="left:857.0px;top:1487.7px;font-size:29.3px;font-weight:700;color:#fff;">Итого:</div><div class="t" style="right:1587.0px;top:1488.8px;font-size:28px;font-weight:700;color:#fff;">2 896 945.00</div><div style="position:absolute;left:646.5px;top:856.5px;width:303.0px;height:45.0px;border:1.5px solid #c4c4c4;border-radius:8px;background:#fff"></div><div class="t" style="left:657.0px;top:864.8px;font-size:23.2px;font-weight:400;color:#000;">Кровельные материалы</div><svg style="position:absolute;left:925px;top:876px;" width="18" height="18" viewBox="0 0 18 18"><path d="M16 3L3 16M16 10l-6 6" stroke="#777" stroke-width="1.5" stroke-linecap="round"/></svg><div style="position:absolute;left:976.5px;top:855.5px;width:322.0px;height:53.0px;border:5px solid #94b3f4;border-radius:15px;background:#fff"></div><div style="position:absolute;left:981px;top:860px;width:313px;height:44px;border:1px solid #c8c8c8;border-radius:10px"></div><div class="t" style="left:995.0px;top:870.5px;font-size:24.2px;font-weight:400;color:#000;">295000</div><div style="position:absolute;left:1263px;top:869px;width:22px;height:25px;background:#efefef;border-radius:5px"></div><svg style="position:absolute;left:1265px;top:870px;" width="18" height="24" viewBox="0 0 18 24"><path d="M4 9l5-5 5 5M4 15l5 5 5-5" fill="none" stroke="#333" stroke-width="1.8" stroke-linecap="round" stroke-linejoin="round"/></svg><div style="position:absolute;left:1046.5px;top:905px;width:58.5px;height:43.5px;background:#3a80f3;border-radius:50%;border:1px solid #5cc0f5"></div><svg style="position:absolute;left:1061px;top:912px;" width="30" height="32" viewBox="0 0 30 32"><path d="M15 3L4 14h6v6h10v-6h6z" fill="none" stroke="#fff" stroke-width="2.2" stroke-linejoin="round"/><rect x="10" y="23" width="10" height="5" rx="1" fill="none" stroke="#fff" stroke-width="2.2"/></svg><div style="position:absolute;left:1327px;top:864.5px;width:218px;height:35.5px;background:#ebebeb;border-radius:9px"></div><div class="t" style="left:1343.0px;top:870.4px;font-size:23.2px;font-weight:400;color:#222;">Начало</div><svg style="position:absolute;left:1514px;top:870px;" width="17" height="24" viewBox="0 0 17 24"><path d="M3 9l5.5-5.5L14 9M3 15l5.5 5.5L14 15" fill="none" stroke="#222" stroke-width="2" stroke-linecap="round" stroke-linejoin="round"/></svg><div style="position:absolute;left:1581px;top:866px;width:144.5px;height:31.700000000000045px;background:#ebebeb;border-radius:9px"></div><div class="t" style="left:1595.0px;top:870.4px;font-size:23.2px;font-weight:400;color:#222;">Сохранить</div><svg style="position:absolute;left:0px;top:0px;pointer-events:none" width="2880" height="1630" viewBox="0 0 2880 1630"><rect x="236.5" y="820" width="1529.5" height="134.5" fill="none" stroke="#e8412a" stroke-width="11"/><line x1="172.7" y1="444.7" x2="286" y2="805" stroke="#e8412a" stroke-width="11" stroke-linecap="butt"/><path d="M258.8 806.4 L310.7 791 L301.5 851.2 Z" fill="#e8412a"/></svg></body></html>
